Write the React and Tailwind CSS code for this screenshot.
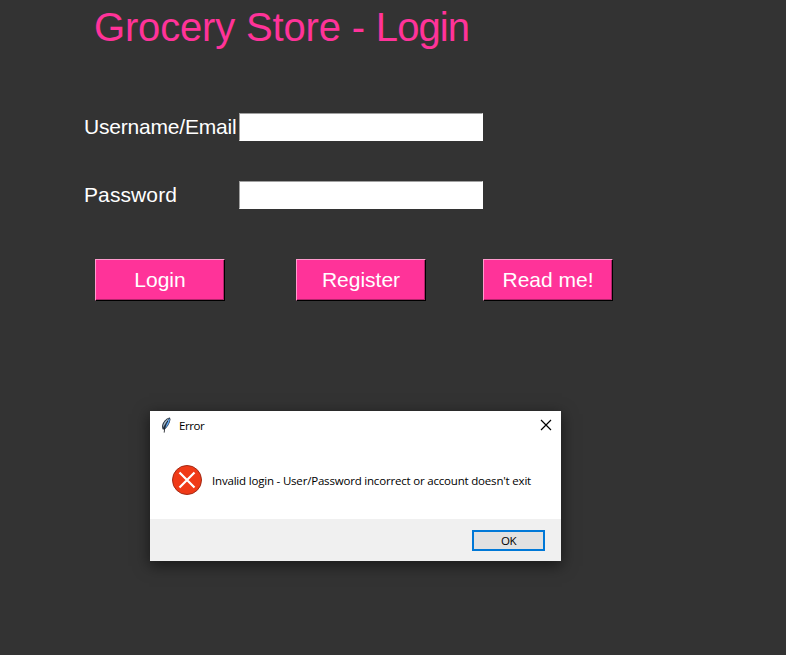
const ARIAL = "font-['Liberation_Sans',Arial,sans-serif]";

function Field({ label, type, spacing }) {
  return (
    <label className="flex h-7 items-center">
      <span className={`w-[155px] shrink-0 whitespace-nowrap text-[21px] leading-7 text-white ${spacing}`}>{label}</span>
      <input
        type={type}
        className="h-7 w-[244px] rounded-none border border-t-[#a0a0a0] border-r-white border-b-white border-l-[#a0a0a0] bg-white outline-none"
      />
    </label>
  );
}

function PinkButton({ children }) {
  return (
    <button className="h-[42px] w-[130px] border border-t-[#ff9acc] border-r-black border-b-black border-l-[#ff9acc] bg-[#ff3399] text-[21px] text-white shadow-[inset_-1px_-1px_0_#b3246b]">
      {children}
    </button>
  );
}

function Feather() {
  return (
    <svg className="ml-[11px] h-4 w-[10px] -translate-y-px" viewBox="0 0 10 16">
      <path d="M8.900.4C6 .8 2.800 3.600 1.500 7c-.7 1.900-.6 3.900.3 5.400L3.600 12.500C6.400 10.200 8.800 6.500 9.500 2.500Z" fill="#2a3644" />
      <path d="M8.600 1.500C6 4 4.400 7.500 3.500 11.800 6.600 9.200 8.300 6 8.800 2.500Z" fill="#5fa5f0" />
      <path d="M8 1.200C4.600 3.200 2.100 6.200 2 10.500L4.500 6.500Z" fill="#a9bccd" />
      <path d="M6.800 4C5 7 3.400 10.500 3.200 15.600" fill="none" stroke="#0b0f14" strokeWidth=".8" />
    </svg>
  );
}

function ErrorDialog() {
  return (
    <div
      role="alertdialog"
      className="absolute left-[150px] top-[411px] flex h-[150px] w-[411px] flex-col bg-white font-['Open_Sans','Noto_Sans',sans-serif] text-[11.500px] text-black shadow-[0_4px_14px_1px_rgba(0,0,0,0.5)]"
    >
      <div className="flex h-[30px] items-center">
        <Feather />
        <span className="ml-2 tracking-[-0.4px]">Error</span>
        <svg className="mr-[9px] mb-[2px] ml-auto size-[12px]" viewBox="0 0 12 12">
          <path d="M1 1l10 10M11 1L1 11" stroke="#000" strokeWidth="1.200" />
        </svg>
      </div>
      <div className="flex h-[78px] items-center pl-[22px]">
        <svg className="size-[30px]" viewBox="0 0 30 30">
          <circle cx="15" cy="15" r="14.500" fill="#f03a17" stroke="#a32a16" />
          <path d="M7.500 7.500l15 15M22.500 7.500l-15 15" stroke="#fff" strokeWidth="2.200" />
        </svg>
        <span className="ml-[10px] pt-[2px] whitespace-nowrap tracking-[-0.19px]">
          Invalid login - User/Password incorrect or account doesn't exit
        </span>
      </div>
      <div className="flex h-[42px] items-center justify-end bg-[#f0f0f0] pr-4">
        <button className="flex h-[21px] w-[73px] items-center justify-center border-2 border-[#0078d7] bg-[#e1e1e1] pt-[2px] tracking-[-0.4px]">
          OK
        </button>
      </div>
    </div>
  );
}

export default function App() {
  return (
    <main className={`relative h-[655px] w-[786px] overflow-hidden bg-[#333333] ${ARIAL}`}>
      <h1 className="ml-[94px] pt-[3px] text-[40px] leading-[48px] tracking-[-0.17px] whitespace-nowrap text-[#ff3399]">
        Grocery Store - <span className="tracking-[-0.9px]">Login</span>
      </h1>
      <form className="mt-[62px] flex flex-col gap-10 pl-[84px]">
        <Field label="Username/Email" type="text" spacing="tracking-[-0.2px]" />
        <Field label="Password" type="password" spacing="tracking-[0.1px]" />
      </form>
      <div className="mt-[50px] flex pl-[95px]">
        <PinkButton>Login</PinkButton>
        <div className="ml-[71px]"><PinkButton>Register</PinkButton></div>
        <div className="ml-[57px]"><PinkButton>Read me!</PinkButton></div>
      </div>
      <ErrorDialog />
    </main>
  );
}
